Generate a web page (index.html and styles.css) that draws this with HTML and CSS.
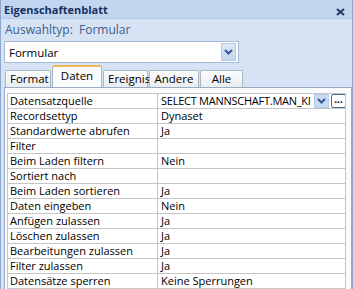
FILE: index.html
```html
<!DOCTYPE html>
<html lang="de">
<head>
    <meta charset="UTF-8">
    <title>Eigenschaftenblatt</title>
    <link rel="stylesheet" href="styles.css">
</head>
<body>
    <div class="sheet">
        <div class="titlebar">
            <span>Eigenschaftenblatt</span>
            <svg class="close" width="9" height="8" viewBox="0 0 9 8">
                <path d="M1 1 L8 7 M8 1 L1 7" stroke="#1e3966" stroke-width="2"/>
            </svg>
        </div>
        <div class="subtitle">Auswahltyp:&nbsp; Formular</div>
        <div class="combo">
            <span class="combo-text">Formular</span>
            <span class="combo-btn">
                <svg width="9" height="6" viewBox="0 0 9 6"><path d="M1 1 L4.5 4.5 L8 1" stroke="#34579a" stroke-width="2" fill="none"/></svg>
            </span>
        </div>
        <div class="tabs">
            <div class="tab">Format</div>
            <div class="tab active">Daten</div>
            <div class="tab">Ereignis</div>
            <div class="tab">Andere</div>
            <div class="tab">Alle</div>
        </div>
        <div class="page">
            <table class="grid">
                <tr class="selected">
                    <td class="name">Datensatzquelle</td>
                    <td class="value">
                        <div class="value-edit">
                            <span class="value-text">SELECT MANNSCHAFT.MAN_KI</span>
                            <span class="mini-btn drop">
                                <svg width="9" height="6" viewBox="0 0 9 6"><path d="M1 1 L4.5 4.5 L8 1" stroke="#34579a" stroke-width="2" fill="none"/></svg>
                            </span>
                            <span class="mini-btn dots">...</span>
                        </div>
                    </td>
                </tr>
                <tr><td class="name">Recordsettyp</td><td class="value">Dynaset</td></tr>
                <tr><td class="name">Standardwerte abrufen</td><td class="value">Ja</td></tr>
                <tr><td class="name">Filter</td><td class="value"></td></tr>
                <tr><td class="name">Beim Laden filtern</td><td class="value">Nein</td></tr>
                <tr><td class="name">Sortiert nach</td><td class="value"></td></tr>
                <tr><td class="name">Beim Laden sortieren</td><td class="value">Ja</td></tr>
                <tr><td class="name">Daten eingeben</td><td class="value">Nein</td></tr>
                <tr><td class="name">Anfügen zulassen</td><td class="value">Ja</td></tr>
                <tr><td class="name">Löschen zulassen</td><td class="value">Ja</td></tr>
                <tr><td class="name">Bearbeitungen zulassen</td><td class="value">Ja</td></tr>
                <tr><td class="name">Filter zulassen</td><td class="value">Ja</td></tr>
                <tr><td class="name">Datensätze sperren</td><td class="value">Keine Sperrungen</td></tr>
            </table>
        </div>
    </div>
</body>
</html>
```

FILE: styles.css
```css
body {
    margin: 0;
    font-family: "Open Sans", "DejaVu Sans", sans-serif;
    font-size: 11px;
    color: #000;
}
.sheet {
    width: 351px;
    height: 289px;
    overflow: hidden;
    background: #d6e3f5;
    border-left: 1px solid #8da8cc;
    border-right: 1px solid #8da8cc;
}
.titlebar {
    height: 18px;
    display: flex;
    align-items: center;
    justify-content: space-between;
    padding: 0 7px 0 3px;
    background: #c3d6ef;
    border-bottom: 1px solid #b3c8e4;
    color: #15325f;
    font-weight: bold;
    font-size: 11px;
}
.close {
    margin-top: 6px;
}
.subtitle {
    padding: 2px 0 0 4px;
    height: 18px;
    color: #3d5d8c;
    font-size: 12px;
}
.combo {
    margin: 2px 0 0 3px;
    width: 233px;
    height: 20px;
    background: #fff;
    border: 1px solid #a6bbd8;
    display: flex;
    align-items: center;
    justify-content: space-between;
}
.combo-text {
    padding-left: 4px;
    font-size: 11.5px;
}
.combo-btn {
    width: 13px;
    height: 16px;
    margin-right: 2px;
    background: linear-gradient(#dbe8f8, #c2d6f0);
    border: 1px solid #b6cbe6;
    display: flex;
    align-items: center;
    justify-content: center;
}
.tabs {
    display: flex;
    align-items: flex-end;
    margin: 3px 0 0 4px;
    height: 21px;
}
.tab {
    height: 16px;
    line-height: 16px;
    padding: 0 4px;
    margin-right: 1px;
    background: linear-gradient(#fdfdfd, #e9ecf0);
    border: 1px solid #a9b6c6;
    border-bottom: none;
    border-radius: 2px 2px 0 0;
    font-size: 11.5px;
    text-align: center;
}
.tab:nth-child(1) { width: 36px; }
.tab:nth-child(3) { width: 35px; }
.tab:nth-child(4) { width: 40px; }
.tab:nth-child(5) { width: 33px; }
.tab.active {
    height: 20px;
    width: 40px;
    line-height: 18px;
    background: #fafbfd;
    border-top: 2px solid #f3b65a;
    margin: 0 1px 0 0;
}
.page {
    margin-left: 3px;
    width: 344px;
    height: 210px;
    background: #fafbfd;
    border: 1px solid #97abc7;
    padding: 5px 0 0 2px;
}
.grid {
    border-collapse: collapse;
    width: 339px;
    table-layout: fixed;
    background: #fff;
    font-size: 11px;
}
.grid td {
    height: 14px;
    padding: 0 0 0 2px;
    border: 1px solid #c5c5c5;
    white-space: nowrap;
    overflow: hidden;
    line-height: 14px;
}
.grid .name {
    width: 147px;
}
.grid .value {
    padding-left: 3px;
}
.value-edit {
    display: flex;
    align-items: center;
}
.value-text {
    flex: none;
    width: 153px;
    letter-spacing: -0.25px;
}
.mini-btn {
    flex: none;
    height: 12px;
    display: flex;
    align-items: center;
    justify-content: center;
}
.mini-btn.drop {
    width: 13px;
    background: #c9dbf3;
    border: 1px solid #b6cbe6;
}
.mini-btn.dots {
    width: 13px;
    margin-left: 2px;
    border: 1px solid #4e6b94;
    border-radius: 2px;
    font-weight: bold;
    line-height: 8px;
    align-items: flex-start;
    font-size: 10px;
}
```
